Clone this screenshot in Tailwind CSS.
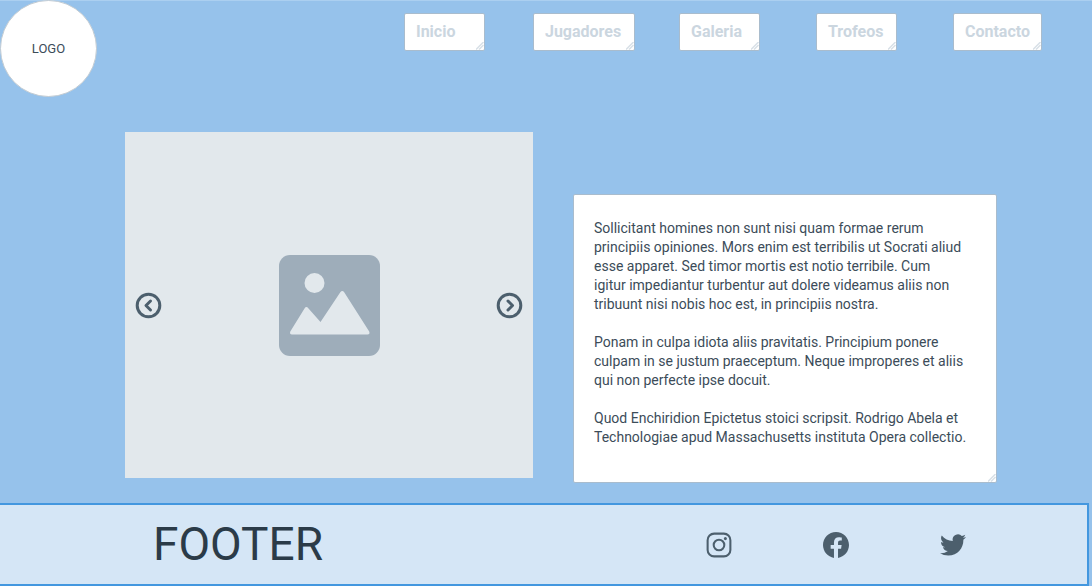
<!DOCTYPE html>
<html lang="es">
<head>
<meta charset="utf-8">
<meta name="viewport" content="width=device-width, initial-scale=1">
<title>Inicio</title>
<script src="https://cdn.jsdelivr.net/npm/@tailwindcss/browser@4"></script>
</head>
<body class="flex min-h-screen flex-col overflow-x-hidden bg-[#96c2eb] font-['Roboto',sans-serif] text-[#3c4c59] shadow-[inset_0_1px_0_#abcff0]">
  <svg class="hidden" aria-hidden="true">
    <symbol id="grip" viewBox="0 0 8 8"><path d="M0 7.500 7.500 0M3 7.500 7.500 3" stroke="#d8e0e7" stroke-width="1.500" fill="none"/></symbol>
  </svg>

  <header class="flex items-start justify-between">
    <a href="#" class="flex size-[97px] items-center justify-center rounded-full border border-[#c3ccd3] bg-white text-[13px]">LOGO</a>
    <nav class="mt-[13px] mr-[50px] flex text-base font-bold leading-5 text-[#cbd6df]">
      <a href="#inicio" class="relative min-w-[81px] rounded-xs border border-[#a9bccd] bg-white px-[11px] py-2">Inicio<svg class="absolute right-0 bottom-0 size-2"><use href="#grip"/></svg></a>
      <a href="#jugadores" class="relative ml-12 min-w-[102px] rounded-xs border border-[#a9bccd] bg-white px-[11px] py-2">Jugadores<svg class="absolute right-0 bottom-0 size-2"><use href="#grip"/></svg></a>
      <a href="#galeria" class="relative ml-11 min-w-[81px] rounded-xs border border-[#a9bccd] bg-white px-[11px] py-2">Galeria<svg class="absolute right-0 bottom-0 size-2"><use href="#grip"/></svg></a>
      <a href="#trofeos" class="relative ml-14 min-w-[81px] rounded-xs border border-[#a9bccd] bg-white px-[11px] py-2">Trofeos<svg class="absolute right-0 bottom-0 size-2"><use href="#grip"/></svg></a>
      <a href="#contacto" class="relative ml-14 min-w-[81px] rounded-xs border border-[#a9bccd] bg-white px-[11px] py-2">Contacto<svg class="absolute right-0 bottom-0 size-2"><use href="#grip"/></svg></a>
    </nav>
  </header>

  <main class="mt-[35px] mb-5 grid flex-1 grid-cols-[408fr_424fr] items-end gap-10 pr-[95px] pl-[125px]">
    <section aria-label="Galeria" class="mb-[5px] flex items-center justify-between self-stretch bg-[#e2e8ec] px-[10px]">
      <button type="button" aria-label="Anterior" class="text-[#4c5f6d]">
        <svg class="size-[27px]" viewBox="0 0 27 27" fill="none" stroke="currentColor" stroke-width="3"><circle cx="13.5" cy="13.5" r="11.3"/><path d="m15.5 9-4.5 4.5 4.5 4.5" stroke-linecap="round" stroke-linejoin="round"/></svg>
      </button>
      <svg class="size-[101px]" viewBox="0 0 101 101" role="img" aria-label="Imagen"><rect width="101" height="101" rx="11" fill="#9eadba"/><g fill="#e2e8ec"><circle cx="35.500" cy="28" r="10"/><path d="M11.300 76.500 25.500 53.500Q27.300 50.800 29.300 53.300L41.500 67 61.300 37.300Q63.300 34.800 65.200 37.300L90.200 76.500Q91.300 79.500 88.500 79.500H13Q10.300 79.500 11.300 76.500Z"/></g></svg>
      <button type="button" aria-label="Siguiente" class="text-[#4c5f6d]">
        <svg class="size-[27px]" viewBox="0 0 27 27" fill="none" stroke="currentColor" stroke-width="3"><circle cx="13.5" cy="13.5" r="11.3"/><path d="m12 9 4.500 4.500-4.500 4.500" stroke-linecap="round" stroke-linejoin="round"/></svg>
      </button>
    </section>
    <div class="relative flex">
      <textarea aria-label="Texto" rows="12" spellcheck="false" class="w-full resize-none overflow-hidden whitespace-pre rounded-xs border border-[#a9bccd] bg-white px-5 pt-6 pb-[35px] text-sm leading-[19px] outline-none">Sollicitant homines non sunt nisi quam formae rerum
principiis opiniones. Mors enim est terribilis ut Socrati aliud
esse apparet. Sed timor mortis est notio terribile. Cum
igitur impediantur turbentur aut dolere videamus aliis non
tribuunt nisi nobis hoc est, in principiis nostra.

Ponam in culpa idiota aliis pravitatis. Principium ponere
culpam in se justum praeceptum. Neque improperes et aliis
qui non perfecte ipse docuit.

Quod Enchiridion Epictetus stoici scripsit. Rodrigo Abela et
Technologiae apud Massachusetts instituta Opera collectio.</textarea>
      <svg class="absolute right-px bottom-px size-2"><use href="#grip"/></svg>
    </div>
  </main>

  <footer class="mr-[3px] flex h-[83px] items-center justify-between border-y-2 border-r-2 border-[#4397df] bg-[#d5e6f6] pr-[121px] pl-[153px] text-[#4c5f6d]">
    <h2 class="text-[46px] text-[#2b3b48]">FOOTER</h2>
    <div class="flex items-center gap-[91px]">
      <a href="#instagram" aria-label="Instagram"><svg class="size-[26px]" viewBox="0 0 24 24" fill="none" stroke="currentColor" stroke-width="1.900"><rect x="1.500" y="1.500" width="21" height="21" rx="6"/><circle cx="12" cy="12" r="4.900"/><circle cx="17.900" cy="6.100" r="1.400" fill="currentColor" stroke="none"/></svg></a>
      <a href="#facebook" aria-label="Facebook"><svg class="size-[26px]" viewBox="0 0 24 24" fill="currentColor"><path d="M24 12.073C24 5.446 18.627.073 12 .073S0 5.446 0 12.073c0 5.990 4.388 10.954 10.125 11.854v-8.385H7.078v-3.470h3.047V9.430c0-3.007 1.792-4.669 4.533-4.669 1.312 0 2.686.235 2.686.235v2.953H15.830c-1.491 0-1.956.925-1.956 1.874v2.250h3.328l-.532 3.470h-2.796v8.385C19.612 23.027 24 18.062 24 12.073z"/></svg></a>
      <a href="#twitter" aria-label="Twitter"><svg class="size-[26px]" viewBox="0 0 24 24" fill="currentColor"><path d="M23.953 4.570a10 10 0 01-2.825.775 4.958 4.958 0 002.163-2.723c-.951.555-2.005.959-3.127 1.184a4.920 4.920 0 00-8.384 4.482C7.690 8.095 4.067 6.130 1.640 3.162a4.822 4.822 0 00-.666 2.475c0 1.710.870 3.213 2.188 4.096a4.904 4.904 0 01-2.228-.616v.060a4.923 4.923 0 003.946 4.827 4.996 4.996 0 01-2.212.085 4.936 4.936 0 004.604 3.417 9.867 9.867 0 01-6.102 2.105c-.390 0-.779-.023-1.170-.067a13.995 13.995 0 007.557 2.209c9.053 0 13.998-7.496 13.998-13.985 0-.210 0-.420-.015-.630A9.935 9.935 0 0024 4.590z"/></svg></a>
    </div>
  </footer>
</body>
</html>
